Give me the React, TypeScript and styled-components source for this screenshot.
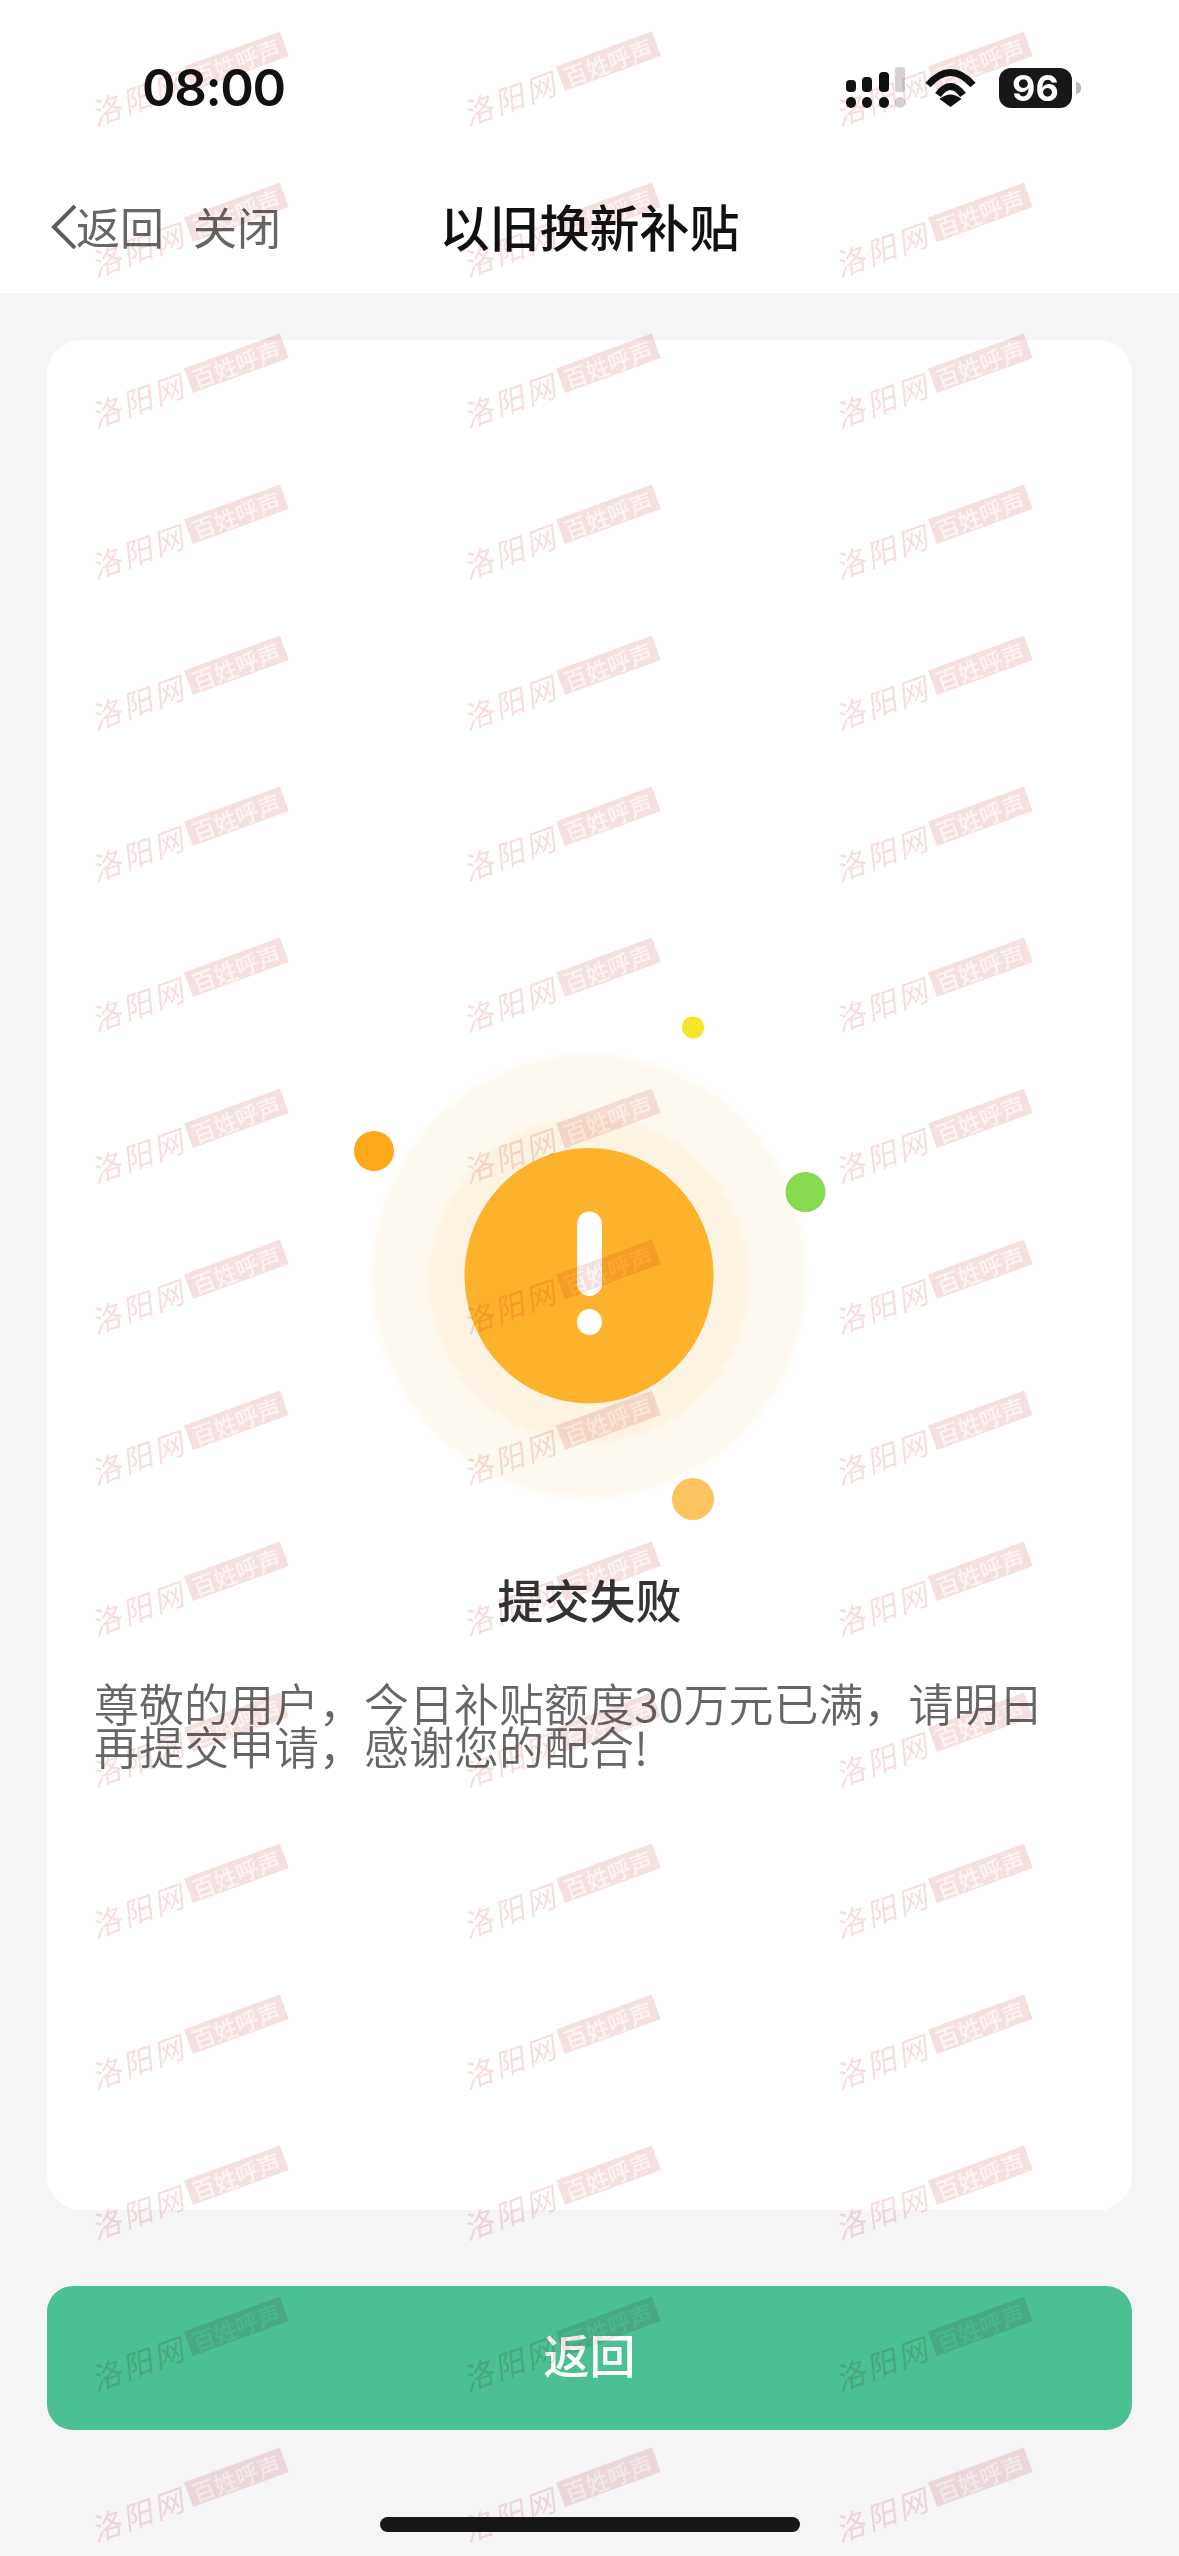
import React from "react";
import styled, { createGlobalStyle } from "styled-components";

const FONT = `"Noto Sans CJK SC", "Noto Sans", sans-serif`;

const Global = createGlobalStyle`
  html, body { margin: 0; padding: 0; background: #f5f5f7; }
  * { box-sizing: border-box; }
`;

const Page = styled.div`
  position: relative;
  width: 1179px;
  height: 2556px;
  overflow: hidden;
  display: flex;
  flex-direction: column;
  background: #f5f5f7;
  font-family: ${FONT};
`;

const Header = styled.header`
  height: 293px;
  background: #fff;
  display: flex;
  flex-direction: column;
`;

const StatusBar = styled.div`
  height: 175px;
  display: flex;
  align-items: center;
  justify-content: space-between;
  padding: 0 98px 0 142px;
`;

const Time = styled.span`
  font-family: Inter, sans-serif;
  font-size: 51px;
  font-weight: 600;
  letter-spacing: -1.4px;
  color: #111;
`;

const StatusIcons = styled.div`
  display: flex;
  align-items: center;
  gap: 20px;
`;

const BatteryGroup = styled.div`
  display: flex;
  align-items: center;
  gap: 4px;
  margin-left: 3px;
`;

const BatteryBody = styled.div`
  width: 73px;
  height: 40px;
  border-radius: 12px;
  background: #17171a;
  color: #fff;
  display: flex;
  align-items: center;
  justify-content: center;
  font-family: Inter, sans-serif;
  font-size: 36px;
  font-weight: 700;
`;

const BatteryCap = styled.div`
  width: 5px;
  height: 12px;
  background: #b8b8bb;
  border-radius: 0 5px 5px 0;
`;

const NavBar = styled.nav`
  height: 118px;
  padding: 0 51px 14px;
  display: grid;
  grid-template-columns: 1fr auto 1fr;
  align-items: center;
`;

const NavLeft = styled.div`
  display: flex;
  align-items: center;
`;

const NavLink = styled.span<{ $gap?: number }>`
  font-size: 44px;
  line-height: 50px;
  color: #666;
  margin: 0 0 3px ${(p) => p.$gap ?? 0}px;
`;

const NavTitle = styled.h1`
  margin: 0 0 5px;
  font-size: 50px;
  line-height: 60px;
  font-weight: 500;
  color: #111;
`;

const Main = styled.main`
  padding: 47px 47px 0;
  display: flex;
  flex-direction: column;
  gap: 76px;
`;

const Card = styled.section`
  height: 1870px;
  background: #fff;
  border-radius: 34px;
  padding: 670px 47px 0;
  display: flex;
  flex-direction: column;
  align-items: center;
`;

const Illustration = styled.svg`
  display: block;
  flex: none;
`;

const ResultTitle = styled.h2`
  margin: 38px 0 0;
  font-size: 46px;
  line-height: 60px;
  font-weight: 500;
  color: #333;
`;

const ResultText = styled.p`
  margin: 53px 0 0;
  width: 100%;
  font-size: 45px;
  line-height: 43px;
  font-weight: 350;
  color: #666;
`;

const PrimaryButton = styled.button`
  height: 144px;
  width: 100%;
  padding: 0 0 10px;
  border: 0;
  border-radius: 26px;
  background: #4ac093;
  color: #fff;
  font-family: ${FONT};
  font-size: 46px;
  font-weight: 500;
`;

const HomeBar = styled.div`
  width: 420px;
  height: 15px;
  margin: 87px auto 0;
  border-radius: 8px;
  background: #17171a;
`;

const Watermarks = styled.div`
  position: absolute;
  inset: 1px 0 0 7px;
  display: grid;
  grid-template-columns: repeat(3, 372px);
  grid-auto-rows: 151px;
  pointer-events: none;
  mix-blend-mode: multiply;
`;

const Mark = styled.div`
  display: flex;
  align-items: center;
  justify-content: center;
  gap: 4px;
  padding-right: 12px;
  white-space: nowrap;
  transform: rotate(-20deg);
`;

const MarkSite = styled.span`
  font-size: 30px;
  line-height: 34px;
  letter-spacing: 3px;
  font-weight: 400;
  font-style: italic;
  color: #f7dddd;
`;

const MarkBadge = styled.span`
  width: 102px;
  height: 26px;
  display: flex;
  align-items: center;
  justify-content: center;
  background: #f5e0e0;
  color: #fcf3f3;
  font-size: 23px;
  line-height: 26px;
  font-weight: 500;
`;

function SignalIcon() {
  const bars = [
    { x: 0, y: 13, h: 12 },
    { x: 16, y: 10, h: 15 },
    { x: 33, y: 5, h: 20 },
  ];
  return (
    <svg width="59" height="41" viewBox="0 0 59 41">
      {bars.map((b) => (
        <g key={b.x} fill="#111">
          <rect x={b.x} y={b.y} width="10" height={b.h} rx="4" />
          <rect x={b.x} y="30" width="10" height="11" rx="5" />
        </g>
      ))}
      <rect x="49" y="0" width="10" height="25" rx="3" fill="#d2d2d2" />
      <rect x="49" y="30" width="10" height="11" rx="5" fill="#d2d2d2" />
    </svg>
  );
}

function WifiIcon() {
  return (
    <svg width="51" height="38" viewBox="0 0 51 38" fill="none" stroke="#111" strokeWidth="7">
      <path d="M3 16 Q25.5 -9 48 16" />
      <path d="M13 26 Q25.5 9 38 26" />
      <path d="M25.5 38 L14.5 30 Q25.5 21 36.5 30 Z" fill="#111" stroke="none" />
    </svg>
  );
}

function Chevron() {
  return (
    <svg width="25" height="44" viewBox="0 0 25 44" fill="none" stroke="#5c5c5c" strokeWidth="4">
      <polyline points="24,1 3,22 24,43" />
    </svg>
  );
}

function AlertGraphic() {
  return (
    <Illustration width="500" height="520" viewBox="0 0 500 520">
      <defs>
        <filter id="soft" x="-5%" y="-5%" width="110%" height="110%">
          <feGaussianBlur stdDeviation="2" />
        </filter>
      </defs>
      <ellipse cx="249" cy="266" rx="217" ry="222" fill="#fefaf1" filter="url(#soft)" />
      <ellipse cx="249" cy="270" rx="160" ry="163" fill="#fdf3e2" filter="url(#soft)" />
      <ellipse cx="249" cy="265.7" rx="124.5" ry="127.7" fill="#fdb22c" />
      <rect x="237" y="201.5" width="25" height="84.5" rx="12.5" fill="#fff" />
      <ellipse cx="249.5" cy="312" rx="12.5" ry="13" fill="#fff" />
      <circle cx="353" cy="17.4" r="11" fill="#f2e829" />
      <circle cx="34" cy="141" r="20" fill="#fea81c" />
      <circle cx="465.5" cy="182" r="20" fill="#88d850" />
      <circle cx="353" cy="489" r="21" fill="#fdc35e" />
    </Illustration>
  );
}

export default function App() {
  return (
    <Page>
      <Global />
      <Header>
        <StatusBar>
          <Time>08:00</Time>
          <StatusIcons>
            <SignalIcon />
            <WifiIcon />
            <BatteryGroup>
              <BatteryBody>96</BatteryBody>
              <BatteryCap />
            </BatteryGroup>
          </StatusIcons>
        </StatusBar>
        <NavBar>
          <NavLeft>
            <Chevron />
            <NavLink>返回</NavLink>
            <NavLink $gap={29}>关闭</NavLink>
          </NavLeft>
          <NavTitle>以旧换新补贴</NavTitle>
        </NavBar>
      </Header>
      <Main>
        <Card>
          <AlertGraphic />
          <ResultTitle>提交失败</ResultTitle>
          <ResultText>尊敬的用户，今日补贴额度30万元已满，请明日再提交申请，感谢您的配合!</ResultText>
        </Card>
        <PrimaryButton>返回</PrimaryButton>
      </Main>
      <HomeBar />
      <Watermarks aria-hidden="true">
        {Array.from({ length: 51 }, (_, i) => (
          <Mark key={i}>
            <MarkSite>洛阳网</MarkSite>
            <MarkBadge>百姓呼声</MarkBadge>
          </Mark>
        ))}
      </Watermarks>
    </Page>
  );
}
